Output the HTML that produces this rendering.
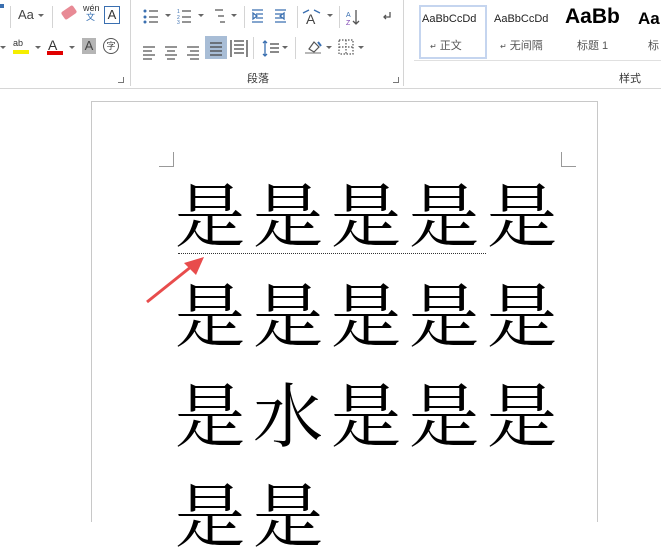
<!DOCTYPE html>
<html><head><meta charset="utf-8"><style>
body{margin:0;width:661px;height:513px;overflow:hidden;background:#fff;position:relative;font-family:"Liberation Sans","Noto Sans CJK SC",sans-serif}
.a{position:absolute}
.ln{position:absolute;background:#d4d4d4}
.row{position:absolute;left:175px;font-family:"Liberation Serif","Noto Serif CJK SC",serif;font-size:70px;line-height:70px;color:#000;white-space:nowrap;letter-spacing:8px}
.dd{position:absolute;width:0;height:0;border-left:3px solid transparent;border-right:3px solid transparent;border-top:3px solid #666}
.st{position:absolute;font-size:11px;color:#222}
</style></head><body>
<div class="ln" style="left:0;top:88px;width:661px;height:1px;background:#d6d6d6"></div>
<div class="ln" style="left:130px;top:0;width:1px;height:86px"></div>
<div class="ln" style="left:403px;top:0;width:1px;height:86px"></div>
<div class="ln" style="left:10px;top:6px;width:1px;height:22px"></div>
<div class="ln" style="left:52px;top:6px;width:1px;height:22px"></div>
<div class="ln" style="left:244px;top:6px;width:1px;height:22px"></div>
<div class="ln" style="left:297px;top:6px;width:1px;height:22px"></div>
<div class="ln" style="left:339px;top:6px;width:1px;height:22px"></div>
<div class="ln" style="left:253px;top:37px;width:1px;height:22px"></div>
<div class="ln" style="left:295px;top:37px;width:1px;height:22px"></div>
<div class="a" style="left:0;top:4px;width:4px;height:4px;background:#3a6fb0"></div>
<div class="a" style="left:18px;top:7px;font-size:13px;color:#444">Aa</div>
<div class="dd" style="left:38px;top:14px"></div>
<div class="a" style="left:62px;top:8px;width:14px;height:9px;background:#e88a95;transform:rotate(-35deg);border-radius:2px"></div>
<div class="a" style="left:83px;top:4px;font-size:9px;color:#333;line-height:9px">wén<br><span style="color:#2f6bb0;padding-left:3px">文</span></div>
<div class="a" style="left:104px;top:6px;width:14px;height:16px;border:1px solid #3a6fb0;font-size:13px;text-align:center;line-height:16px;color:#333">A</div>
<div class="dd" style="left:0;top:46px"></div>
<div class="a" style="left:13px;top:38px;font-size:9px;color:#333">ab</div>
<div class="a" style="left:13px;top:50px;width:16px;height:4px;background:#f5ee00"></div>
<div class="dd" style="left:35px;top:46px"></div>
<div class="a" style="left:48px;top:37px;font-size:14px;color:#333">A</div>
<div class="a" style="left:47px;top:51px;width:16px;height:4px;background:#e00000"></div>
<div class="dd" style="left:69px;top:46px"></div>
<div class="a" style="left:82px;top:38px;width:14px;height:16px;background:#b5b5b5;font-size:13px;text-align:center;line-height:16px;color:#444">A</div>
<div class="a" style="left:103px;top:38px;width:14px;height:14px;border:1px solid #555;border-radius:50%;font-size:9px;text-align:center;line-height:14px;color:#444">字</div>
<svg class="a" style="left:140px;top:6px" width="260" height="56" viewBox="0 0 260 56" fill="none" stroke="#555" stroke-width="1.3">
<g fill="#3a6fb0" stroke="none"><circle cx="5" cy="5" r="1.5"/><circle cx="5" cy="11" r="1.5"/><circle cx="5" cy="16" r="1.5"/></g>
<path d="M9 5h9M9 11h9M9 16h9"/>
<path d="M42 5h9M42 11h9M42 16h9"/>
<text x="37" y="7" font-size="5" fill="#3a6fb0" stroke="none">1</text><text x="37" y="13" font-size="5" fill="#3a6fb0" stroke="none">2</text><text x="37" y="18" font-size="5" fill="#3a6fb0" stroke="none">3</text>
<path d="M75 4h8M78 10h6M80 16h5"/>
<path d="M112 4h11M116 8h7M116 12h7M112 16h11M117 10l-4-3v6z" stroke="#3a6fb0"/>
<path d="M135 4h11M135 8h7M135 12h7M135 16h11M140 10l4-3v6z" stroke="#3a6fb0"/>
<text x="166" y="18" font-size="14" fill="#444" stroke="none">A</text><path d="M163 7l6-3M180 7l-6-3" stroke="#3a6fb0"/>
<text x="206" y="11" font-size="7" fill="#3a6fb0" stroke="none">A</text><text x="206" y="19" font-size="7" fill="#7a3fb0" stroke="none">Z</text><path d="M216 4v14M213 15l3 3 3-3"/>
<path d="M250 6v5h-6M246 9l-2 2 2 2" stroke="#555"/>
<path d="M3 41h12M3 45h9M3 49h12M3 53h9"/>
<path d="M25 41h12M27 45h8M25 49h12M27 53h8"/>
<path d="M47 41h12M50 45h9M47 49h12M50 53h9"/>
</svg>
<div class="dd" style="left:165px;top:14px"></div>
<div class="dd" style="left:198px;top:14px"></div>
<div class="dd" style="left:231px;top:14px"></div>
<div class="dd" style="left:327px;top:14px"></div>
<div class="a" style="left:205px;top:36px;width:22px;height:23px;background:#a8bdd6"></div>
<svg class="a" style="left:205px;top:36px" width="80" height="24" fill="none" stroke="#444" stroke-width="1.3">
<path d="M5 7h12M5 11h12M5 15h12M5 19h12"/>
<path d="M26 4v17M42 4v17M29 9h10M29 13h10M29 17h10M29 5h10" />
<path d="M60 5v15M58 7l2-2 2 2M58 18l2 2 2-2" stroke="#3a6fb0"/><path d="M65 8h9M65 12h9M65 16h9"/>
</svg>
<div class="dd" style="left:282px;top:46px"></div>
<svg class="a" style="left:303px;top:37px" width="90" height="22" fill="none" stroke="#555" stroke-width="1.2">
<path d="M2 16h16" stroke="#888"/><path d="M6 12l5-7 5 5-5 5z"/><path d="M15 5l3 4" stroke="#3a6fb0" stroke-width="2"/>
<path d="M36 3h14v14h-14z M43 3v14M36 10h14" stroke-dasharray="1.5 1.5"/>
</svg>
<div class="dd" style="left:326px;top:46px"></div>
<div class="dd" style="left:358px;top:46px"></div>
<div class="a" style="left:247px;top:70px;font-size:11px;color:#333">段落</div>
<div class="a" style="left:118px;top:77px;width:5px;height:5px;border-right:1px solid #777;border-bottom:1px solid #777"></div>
<div class="a" style="left:393px;top:77px;width:5px;height:5px;border-right:1px solid #777;border-bottom:1px solid #777"></div>
<div class="a" style="left:414px;top:60px;width:247px;height:1px;background:#e0e0e0"></div>
<div class="a" style="left:419px;top:5px;width:64px;height:50px;border:2px solid #c5d5ef"></div>
<div class="st" style="left:422px;top:13px">AaBbCcDd</div>
<div class="st" style="left:430px;top:37px;color:#555"><span style="font-size:8px">↵</span> 正文</div>
<div class="st" style="left:494px;top:13px">AaBbCcDd</div>
<div class="st" style="left:500px;top:37px;color:#555"><span style="font-size:8px">↵</span> 无间隔</div>
<div class="a" style="left:565px;top:5px;font-size:21px;font-weight:bold;color:#000;width:60px;overflow:hidden;white-space:nowrap">AaBb</div>
<div class="st" style="left:577px;top:37px;color:#555">标题 1</div>
<div class="a" style="left:638px;top:9px;font-size:17px;font-weight:bold;color:#000;white-space:nowrap">Aa</div>
<div class="st" style="left:648px;top:37px;color:#555">标</div>
<div class="a" style="left:619px;top:70px;font-size:11px;color:#333">样式</div>
<div class="a" style="left:91px;top:101px;width:505px;height:420px;border:1px solid #c8c8c8;border-bottom:none"></div>
<div class="a" style="left:159px;top:152px;width:14px;height:14px;border-right:1px solid #999;border-bottom:1px solid #999"></div>
<div class="a" style="left:561px;top:152px;width:14px;height:14px;border-left:1px solid #999;border-bottom:1px solid #999"></div>
<div class="row" style="top:184px">是是是是是</div>
<div class="row" style="top:284px">是是是是是</div>
<div class="row" style="top:384px">是水是是是</div>
<div class="row" style="top:484px">是是</div>
<div class="a" style="left:178px;top:253px;width:308px;border-top:1px dotted #333"></div>
<svg class="a" style="left:140px;top:250px" width="70" height="60"><path d="M7 52L52 16" stroke="#e84c4c" stroke-width="3"/><path d="M64 7L44 13L56 25Z" fill="#e84c4c"/></svg>
</body></html>
